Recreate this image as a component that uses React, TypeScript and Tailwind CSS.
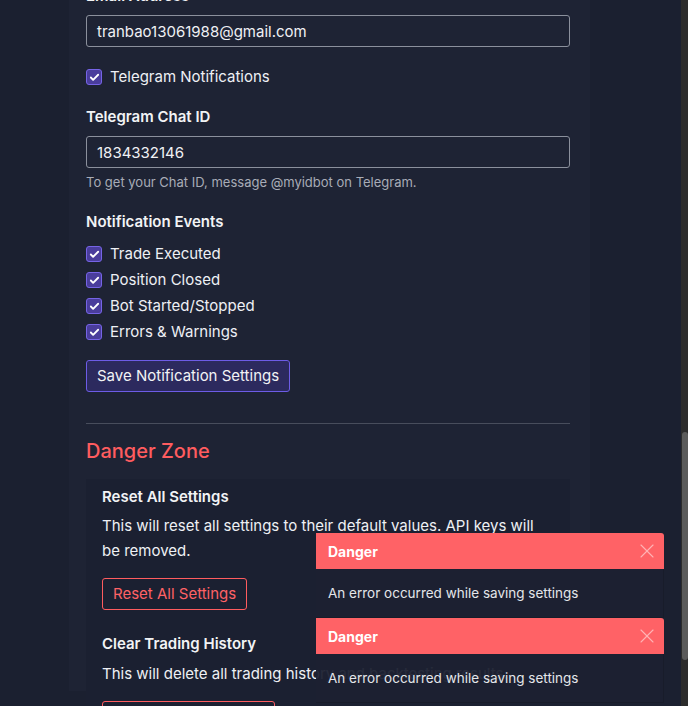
import { Check, X } from "lucide-react";

const font = { fontFamily: 'Inter, "Noto Sans", sans-serif' };

function CheckRow({ label, className = "" }: { label: string; className?: string }) {
  return (
    <label className={`flex items-center gap-2 h-[26px] text-[15px] text-[#eef0f4] ${className}`}>
      <span className="flex items-center justify-center w-4 h-4 rounded-[3px] bg-[#4a3d9c] border border-[#7664e6]">
        <Check className="w-[11px] h-[11px] text-white" strokeWidth={4} />
      </span>
      {label}
    </label>
  );
}

function Toast({ className = "" }: { className?: string }) {
  return (
    <div className={`w-[348px] ${className}`}>
      <div className="h-[36px] bg-[#ff6266] rounded-tr-[3px] flex items-center justify-between pl-3 pr-[5px]">
        <span className="text-[14px] font-bold text-white">Danger</span>
        <X className="w-[24px] h-[24px] text-[#ffb3b5]" strokeWidth={1.1} />
      </div>
      <div className="h-[49px] bg-[#1c2131]/95 border-r border-b border-[#181c2a] flex items-center pl-3 text-[13.5px] text-[#e4e6ea]">
        An error occurred while saving settings
      </div>
    </div>
  );
}

export default function App() {
  return (
    <div className="relative w-[688px] h-[706px] overflow-hidden flex bg-[#1b2030]" style={font}>
      <div className="flex-1 pl-[69px] pr-[91px]">
        <div className="bg-[#1e2334] h-full px-[17px]">
          <div className="-mt-[15px] flex flex-col">
            <div className="text-[15px] font-semibold leading-[22px] text-[#f2f3f5]">Email Address</div>
            <div className="mt-[8px] h-[32px] w-[484px] border border-[#8b909c] rounded-[3px] flex items-center px-[10px] pt-[2px] text-[15px] text-[#f0f1f4]">
              tranbao13061988@gmail.com
            </div>
            <CheckRow label="Telegram Notifications" className="mt-[17px]" />
            <div className="mt-[16px] text-[15px] font-semibold leading-[22px] text-[#f2f3f5]">Telegram Chat ID</div>
            <div className="mt-[8px] h-[32px] w-[484px] border border-[#8b909c] rounded-[3px] flex items-center px-[10px] pt-[2px] text-[15px] text-[#f0f1f4]">
              1834332146
            </div>
            <div className="mt-[5px] text-[13px] leading-[18px] text-[#a8acb7]">
              To get your Chat ID, message @myidbot on Telegram.
            </div>
            <div className="mt-[20px] text-[15px] font-semibold leading-[22px] text-[#f2f3f5]">Notification Events</div>
            <div className="mt-[8px] flex flex-col">
              <CheckRow label="Trade Executed" />
              <CheckRow label="Position Closed" />
              <CheckRow label="Bot Started/Stopped" />
              <CheckRow label="Errors & Warnings" />
            </div>
            <button className="mt-[15px] self-start h-[32px] px-[10px] rounded-[3px] bg-[#2c2a5e] border border-[#6d5ce6] text-[15px] text-[#f2f3f5]">
              Save Notification Settings
            </button>
            <div className="mt-[31px] w-[484px] border-t border-[#484d5c]" />
            <div className="mt-[13px] text-[20px] leading-[28px] font-medium text-[#ff5c5f]">Danger Zone</div>
            <div className="mt-[14px] w-[484px] bg-[#1b2031] px-4 pt-[7px] pb-4">
              <div className="text-[15px] font-semibold leading-[22px] text-[#f2f3f5]">Reset All Settings</div>
              <p className="mt-[5px] text-[15px] leading-[25px] text-[#eef0f4]">
                This will reset all settings to their default values. API keys will be removed.
              </p>
              <button className="mt-[15px] h-[32px] px-[10px] rounded-[3px] border border-[#ff5c5f] text-[15px] text-[#ff6266]">
                Reset All Settings
              </button>
              <div className="mt-[23px] text-[15px] font-semibold leading-[22px] text-[#f2f3f5]">Clear Trading History</div>
              <p className="mt-[6px] text-[15px] leading-[25px] text-[#eef0f4]">
                This will delete all trading history and backtesting results.
              </p>
              <button className="mt-[15px] h-[32px] px-[10px] rounded-[3px] border border-[#ff5c5f] text-[15px] text-[#ff6266]">
                Clear Trading History
              </button>
            </div>
          </div>
        </div>
      </div>
      <div className="w-[7px] bg-[#2c2c2c] flex flex-col">
        <div className="mt-[432px] h-[228px] mx-[0.5px] rounded-[3px] bg-[#5b5b5b]" />
      </div>

      <div className="absolute left-[316px] top-[533px] flex flex-col">
        <Toast />
        <Toast />
      </div>
    </div>
  );
}
